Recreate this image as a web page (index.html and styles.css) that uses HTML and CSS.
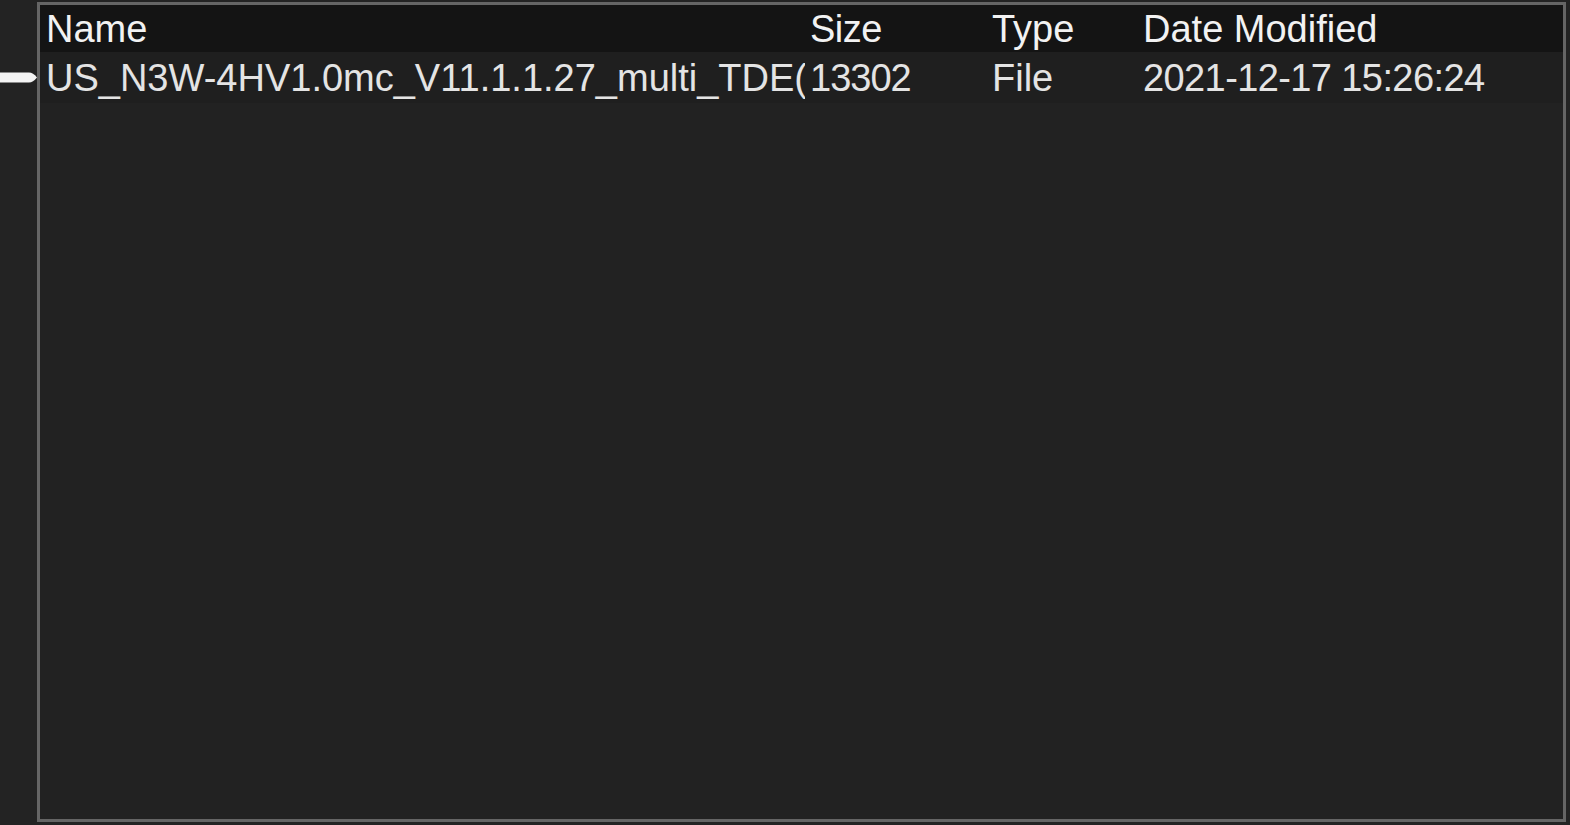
FILE: index.html
```html
<!DOCTYPE html>
<html>
<head>
<meta charset="utf-8">
<link rel="stylesheet" href="styles.css">
</head>
<body>
<div class="screen">
  <svg class="pointer" width="38" height="13" viewBox="0 0 38 13">
    <path d="M0 1.5 H29 Q33 1.5 37 6.5 Q33 11.5 29 11.5 H0 Z" fill="#f4f4f4"/>
  </svg>
  <div class="panel">
    <div class="row head">
      <div class="cell name">Name</div>
      <div class="cell size">Size</div>
      <div class="cell type">Type</div>
      <div class="cell date">Date Modified</div>
    </div>
    <div class="row item">
      <div class="cell name">US_N3W-4HV1.0mc_V11.1.1.27_multi_TDE(1).bin</div>
      <div class="cell size num">13302</div>
      <div class="cell type">File</div>
      <div class="cell date dt">2021-12-17 15:26:24</div>
    </div>
  </div>
</div>
</body>
</html>
```
FILE: styles.css
```css
html, body {
  margin: 0;
  padding: 0;
  background: #232323;
  width: 1570px;
  height: 825px;
  overflow: hidden;
}
.screen {
  position: relative;
  width: 1570px;
  height: 825px;
  padding: 2px 0 0 37px;
  box-sizing: border-box;
  font-family: "Liberation Sans", Arial, sans-serif;
}
.pointer {
  position: absolute;
  left: 0;
  top: 71px;
}
.panel {
  width: 1529px;
  height: 820px;
  box-sizing: border-box;
  border: 3px solid #656565;
  background: #222222;
  display: flex;
  flex-direction: column;
}
.row {
  display: grid;
  grid-template-columns: 765px 185px 151px 1fr;
  font-size: 38px;
  white-space: nowrap;
}
.head {
  background: #141414;
  height: 47px;
  line-height: 49px;
  color: #f2f2f2;
}
.item {
  background: #1f1f1f;
  height: 51px;
  line-height: 52px;
  color: #e4e4e4;
}
.cell {
  overflow: hidden;
  padding-left: 2px;
}
.cell.name {
  padding-left: 6px;
}
.cell.size {
  padding-left: 5px;
}
.head .cell.size {
  letter-spacing: -0.5px;
}
.num {
  letter-spacing: -1px;
}
.dt {
  letter-spacing: -0.6px;
}
```
